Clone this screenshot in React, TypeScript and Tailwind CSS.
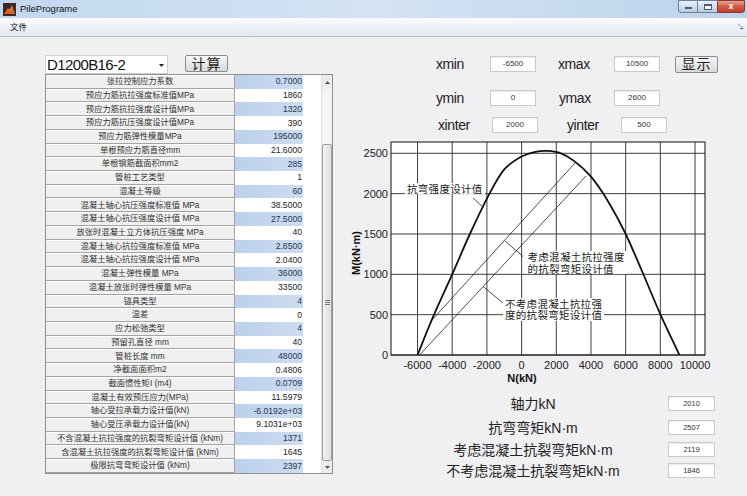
import React from "react";

const rows: [string, string][] = [
  ["张拉控制应力系数", "0.7000"],
  ["预应力筋抗拉强度标准值MPa", "1860"],
  ["预应力筋抗拉强度设计值MPa", "1320"],
  ["预应力筋抗压强度设计值MPa", "390"],
  ["预应力筋弹性模量MPa", "195000"],
  ["单根预应力筋直径mm", "21.6000"],
  ["单根钢筋截面积mm2", "285"],
  ["管桩工艺类型", "1"],
  ["混凝土等级", "60"],
  ["混凝土轴心抗压强度标准值 MPa", "38.5000"],
  ["混凝土轴心抗压强度设计值 MPa", "27.5000"],
  ["放张时混凝土立方体抗压强度 MPa", "40"],
  ["混凝土轴心抗拉强度标准值 MPa", "2.8500"],
  ["混凝土轴心抗拉强度设计值 MPa", "2.0400"],
  ["混凝土弹性模量 MPa", "36000"],
  ["混凝土放张时弹性模量 MPa", "33500"],
  ["锚具类型", "4"],
  ["温差", "0"],
  ["应力松弛类型", "4"],
  ["预留孔直径 mm", "40"],
  ["管桩长度 mm", "48000"],
  ["净截面面积m2", "0.4806"],
  ["截面惯性矩I (m4)", "0.0709"],
  ["混凝土有效预压应力(MPa)", "11.5979"],
  ["轴心受拉承载力设计值(kN)", "-6.0192e+03"],
  ["轴心受压承载力设计值(kN)", "9.1031e+03"],
  ["不含混凝土抗拉强度的抗裂弯矩设计值 (kNm)", "1371"],
  ["含混凝土抗拉强度的抗裂弯矩设计值 (kNm)", "1645"],
  ["极限抗弯弯矩设计值 (kNm)", "2397"],
];

// chart mapping (svg coords)
const X = (n: number) => 189.6 + n * 0.017344;
const Y = (m: number) => 219 - m * 0.08068;

const curve: [number, number][] = [
  [-6000, 0], [-5050, 500], [-4000, 1000], [-2980, 1500], [-1850, 2000],
  [-1000, 2300], [0, 2460], [800, 2518], [1500, 2530], [2200, 2505],
  [3000, 2410], [4000, 2210], [5000, 1900], [6000, 1500], [7000, 1010],
  [8000, 505], [9100, 0],
];

function smoothPath(pts: [number, number][]) {
  const p = pts.map(([n, m]) => [X(n), Y(m)]);
  let d = `M${p[0][0].toFixed(1)},${p[0][1].toFixed(1)}`;
  for (let i = 0; i < p.length - 1; i++) {
    const p0 = p[i - 1] ?? p[i];
    const p1 = p[i];
    const p2 = p[i + 1];
    const p3 = p[i + 2] ?? p2;
    const c1x = p1[0] + (p2[0] - p0[0]) / 6;
    const c1y = p1[1] + (p2[1] - p0[1]) / 6;
    const c2x = p2[0] - (p3[0] - p1[0]) / 6;
    const c2y = p2[1] - (p3[1] - p1[1]) / 6;
    d += ` C${c1x.toFixed(1)},${c1y.toFixed(1)} ${c2x.toFixed(1)},${c2y.toFixed(1)} ${p2[0].toFixed(1)},${p2[1].toFixed(1)}`;
  }
  return d;
}

function Field({ value }: { value: string }) {
  return (
    <div className="w-[46px] h-[16px] bg-white border border-[#cacaca] shadow-[inset_0_1px_1px_rgba(0,0,0,0.08)] flex items-center justify-center text-[8px] text-[#333]">
      {value}
    </div>
  );
}

function Button({ label }: { label: string }) {
  return (
    <div className="w-[43px] h-[17px] border border-[#8c8c8c] rounded-[2px] bg-linear-to-b from-[#f8f8f8] to-[#d9d9d9] flex items-center justify-center text-[14px] leading-none tracking-[1px] text-[#222]">
      {label}
    </div>
  );
}

function Label({ text, w, ml }: { text: string; w: string; ml?: string }) {
  return <span className={`${w} ${ml ?? ""} text-[14px] tracking-[-0.4px] text-[#222] leading-none`}>{text}</span>;
}

function TitleBar() {
  return (
    <div className="h-[18px] flex items-center bg-linear-to-r from-[#c2d8ef] via-[#d3e3f3] to-[#bcd3ec]">
      <svg width="13" height="13" viewBox="0 0 13 13" className="ml-[3px]">
        <rect x="0" y="0" width="13" height="13" fill="#3a2a2a" />
        <path d="M1 11 L5 5 L7 7 L9 2 L12 11 Z" fill="#e0602a" />
        <path d="M5 5 L7 7 L9 2 L8 8 Z" fill="#f7b43a" />
      </svg>
      <span className="ml-[4px] text-[9.5px] text-[#111]">PilePrograme</span>
      <div className="ml-auto flex h-[13px] self-start mr-[2px]">
        <div className="w-[20px] h-full border border-[#6d7f98] rounded-bl-[3px] bg-linear-to-b from-[#e9f1fa] to-[#b8cbe2] flex items-end justify-center pb-[3px]">
          <div className="w-[7px] h-[2px] bg-white border border-[#4c5a6e]" />
        </div>
        <div className="w-[19px] h-full border-y border-[#6d7f98] bg-linear-to-b from-[#e9f1fa] to-[#b8cbe2] flex items-center justify-center">
          <div className="w-[8px] h-[6px] border border-[#4c5a6e] border-t-2 bg-white" />
        </div>
        <div className="w-[28px] h-full border border-[#8a3a30] rounded-br-[3px] bg-linear-to-b from-[#e9a08e] via-[#cf5a45] to-[#c0402c] flex items-center justify-center text-[9px] font-bold text-white leading-none">
          x
        </div>
      </div>
    </div>
  );
}

function MenuBar() {
  return (
    <div className="h-[19px] flex items-center bg-linear-to-b from-[#fbfcfe] to-[#e3e8f2] border-b border-[#b8bfcc]">
      <span className="ml-[10px] text-[8.5px] text-[#111]">文件</span>
      <span className="ml-auto mr-[3px] text-[7px] text-[#444]">↘</span>
    </div>
  );
}

function ParamTable() {
  return (
    <div className="w-[288px] h-[400px] border border-[#8f9090] bg-white flex">
      <div className="w-[257px] flex flex-col">
        {rows.map(([k, v], i) => (
          <div key={k} className="flex-1 min-h-0 flex">
            <div className="w-[189px] bg-[#f0f0f0] border-b border-r border-[#a3a3a3] shadow-[inset_0_1px_0_#ffffff] flex items-center justify-center text-[8.3px] text-[#333] whitespace-nowrap">
              {k}
            </div>
            <div
              className={
                i % 2 === 0
                  ? "w-[68px] bg-linear-to-r from-[#bcd1ec] to-[#cddcf0] flex items-center justify-end pr-[1px] text-[8.6px] text-[#1f3458]"
                  : "w-[68px] bg-white flex items-center justify-end pr-[1px] text-[8.6px] text-[#222]"
              }
            >
              {v}
            </div>
          </div>
        ))}
      </div>
      <div className="w-[18px] bg-white" />
      <div className="w-[11px] flex flex-col bg-[#ececec] border-l border-[#e0e0e0]">
        <div className="h-[14px] flex items-center justify-center">
          <svg width="5" height="3" viewBox="0 0 5 3">
            <path d="M0 3 L2.5 0 L5 3 Z" fill="#555" />
          </svg>
        </div>
        <div className="flex-1 flex flex-col pt-[55px] bg-[#f4f4f4]">
          <div className="flex-1 border border-[#9c9c9c] rounded-[2px] bg-linear-to-r from-[#f3f3f3] to-[#dedede] flex items-center justify-center">
            <div className="flex flex-col gap-[1px]">
              <div className="w-[5px] h-px bg-[#777]" />
              <div className="w-[5px] h-px bg-[#777]" />
              <div className="w-[5px] h-px bg-[#777]" />
            </div>
          </div>
        </div>
        <div className="h-[12px] flex items-center justify-center">
          <svg width="5" height="3" viewBox="0 0 5 3">
            <path d="M0 0 L2.5 3 L5 0 Z" fill="#555" />
          </svg>
        </div>
      </div>
    </div>
  );
}

function Note({ x, y, w, h, lines }: { x: number; y: number; w: number; h: number; lines: string[] }) {
  return (
    <foreignObject x={x} y={y} width={w} height={h}>
      <div className="w-fit bg-white px-[2px] text-[10.5px] leading-[11.5px] tracking-[0.3px] text-[#222] whitespace-nowrap font-['Noto_Sans_CJK_SC',sans-serif]">
        {lines.map((l) => (
          <div key={l} className="h-[11.5px]">
            {l}
          </div>
        ))}
      </div>
    </foreignObject>
  );
}

function Chart() {
  const vx = [-6000, -4000, -2000, 0, 2000, 4000, 6000, 8000, 10000];
  const hy = [0, 500, 1000, 1500, 2000, 2500];
  return (
    <svg width="400" height="250" viewBox="0 0 400 250" className="block">
      <rect x="59" y="6" width="314" height="213" fill="#ffffff" />
      {vx.map((n) => (
        <line key={n} x1={X(n)} y1="6" x2={X(n)} y2="219" stroke="#2a2a2a" strokeWidth="0.9" />
      ))}
      {hy.map((m) => (
        <line key={m} x1="59" y1={Y(m)} x2="373" y2={Y(m)} stroke="#2a2a2a" strokeWidth="0.9" />
      ))}
      {/* cracking moment lines */}
      <line x1="100" y1="184" x2="243" y2="27" stroke="#222" strokeWidth="0.8" />
      <line x1="87.5" y1="219" x2="254" y2="40" stroke="#222" strokeWidth="0.8" />
      <path d={smoothPath(curve)} fill="none" stroke="#111" strokeWidth="1.8" strokeLinejoin="round" />

      {/* annotations */}
      <Note x={73} y={46.5} w={84} h={13} lines={["抗弯强度设计值"]} />
      <line x1="141" y1="62" x2="151.5" y2="71.5" stroke="#222" strokeWidth="0.8" />
      <Note x={193.5} y={115} w={108} h={24} lines={["考虑混凝土抗拉强度", "的抗裂弯矩设计值"]} />
      <line x1="173" y1="105" x2="191" y2="120.5" stroke="#222" strokeWidth="0.8" />
      <Note x={171} y={161.5} w={108} h={24} lines={["不考虑混凝土抗拉强", "度的抗裂弯矩设计值"]} />
      <line x1="171" y1="167" x2="151.3" y2="150.7" stroke="#222" strokeWidth="0.8" />

      <rect x="59" y="6" width="314" height="213" fill="none" stroke="#111" strokeWidth="1" />
      {hy.map((m) => (
        <text key={m} x="56" y={Y(m) + 4} fontSize="11" textAnchor="end" fill="#222">
          {m}
        </text>
      ))}
      {vx.map((n) => (
        <text key={n} x={X(n)} y="233" fontSize="11" textAnchor="middle" fill="#222">
          {n}
        </text>
      ))}
      <text x="190" y="246" fontSize="11" fontWeight="bold" textAnchor="middle" fill="#111">
        N(kN)
      </text>
      <text x="28" y="117" fontSize="11" fontWeight="bold" textAnchor="middle" fill="#111" transform="rotate(-90 28 117)">
        M(kN·m)
      </text>
    </svg>
  );
}

function ResultRow({ label, value, mt }: { label: string; value: string; mt: string }) {
  return (
    <div className={`${mt} flex items-center h-[15px] pl-[108px]`}>
      <div className="w-[186px] text-center text-[14px] leading-none text-[#222] whitespace-nowrap">{label}</div>
      <div className="ml-[42px] w-[47px] h-[15px] bg-white border border-[#cacaca] shadow-[inset_0_1px_1px_rgba(0,0,0,0.08)] flex items-center justify-center text-[7.5px] text-[#333]">
        {value}
      </div>
    </div>
  );
}

export default function App() {
  return (
    <div className="w-[747px] h-[496px] overflow-hidden flex flex-col bg-[#f0eff1] font-['Liberation_Sans','Noto_Sans_CJK_SC',sans-serif]">
      <TitleBar />
      <MenuBar />
      <div className="flex-1 flex">
        {/* left: selector + parameter table */}
        <div className="w-[332px] pl-[45px] pt-[18px] flex flex-col">
          <div className="flex items-start">
            <div className="w-[123px] h-[19px] bg-white border border-[#d0d0d0] flex items-center pl-[1px] relative">
              <span className="text-[15px] tracking-[-0.6px] leading-none text-[#111]">D1200B16-2</span>
              <svg width="5" height="3" viewBox="0 0 5 3" className="absolute right-[3px] top-[8px]">
                <path d="M0 0 L2.5 3 L5 0 Z" fill="#222" />
              </svg>
            </div>
            <div className="ml-[17px]">
              <Button label="计算" />
            </div>
          </div>
          <ParamTable />
        </div>

        {/* right: axis settings, chart, results */}
        <div className="flex-1 flex flex-col pt-[19px]">
          <div className="flex items-center h-[16px] pl-[104px]">
            <Label text="xmin" w="w-[54px]" />
            <Field value="-6500" />
            <Label text="xmax" w="w-[56px]" ml="ml-[22px]" />
            <Field value="10500" />
            <div className="ml-[15px]">
              <Button label="显示" />
            </div>
          </div>
          <div className="mt-[18px] flex items-center h-[16px] pl-[104px]">
            <Label text="ymin" w="w-[54px]" />
            <Field value="0" />
            <Label text="ymax" w="w-[55px]" ml="ml-[23px]" />
            <Field value="2600" />
          </div>
          <div className="mt-[11px] flex items-center h-[16px] pl-[106px]">
            <Label text="xinter" w="w-[54px]" />
            <Field value="2000" />
            <Label text="yinter" w="w-[54px]" ml="ml-[29px]" />
            <Field value="500" />
          </div>
          <div className="mt-[3px]">
            <Chart />
          </div>
          <ResultRow mt="mt-[10px]" label="轴力kN" value="2010" />
          <ResultRow mt="mt-[9px]" label="抗弯弯矩kN·m" value="2507" />
          <ResultRow mt="mt-[7px]" label="考虑混凝土抗裂弯矩kN·m" value="2119" />
          <ResultRow mt="mt-[6px]" label="不考虑混凝土抗裂弯矩kN·m" value="1846" />
        </div>
      </div>
    </div>
  );
}
